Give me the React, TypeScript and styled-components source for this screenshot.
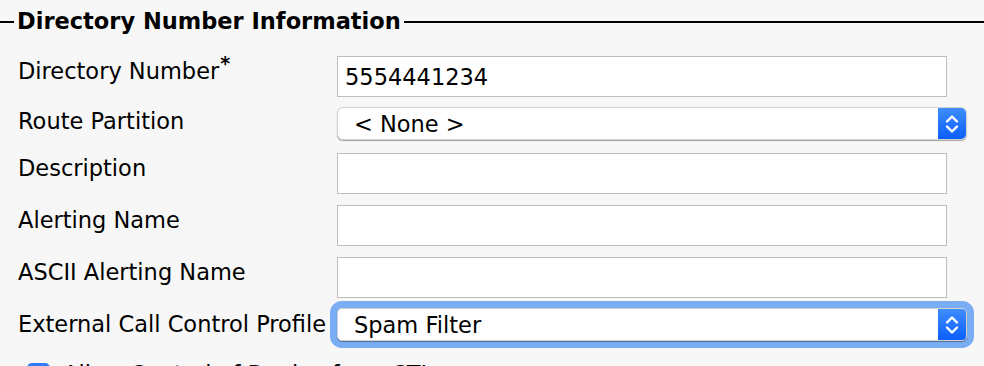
import React from "react";
import styled, { createGlobalStyle, css } from "styled-components";

const Global = createGlobalStyle`
  html, body {
    margin: 0;
    padding: 0;
    background: #f7f7f7;
    overflow: hidden;
  }
  body {
    font-family: "DejaVu Sans", Verdana, sans-serif;
    color: #000;
  }
`;

const Page = styled.div`
  width: 984px;
  height: 366px;
  overflow: hidden;
  padding-top: 9px;
  box-sizing: border-box;
`;

const Fieldset = styled.fieldset`
  margin: 0;
  padding: 0 0 0 18px;
  border: none;
  border-top: 2px solid #000;
  min-width: 0;
`;

const Legend = styled.legend`
  margin-left: -4px;
  padding: 0 3px;
  font-size: 22.5px;
  font-weight: bold;
  line-height: 25px;
`;

const Form = styled.div`
  display: grid;
  grid-template-columns: 319px 1fr;
  row-gap: 11px;
  margin-top: 22px;
  align-items: start;
`;

const Label = styled.label<{ $tight?: boolean }>`
  font-size: 22.5px;
  line-height: 26px;
  white-space: nowrap;
  padding-top: ${(p) => (p.$tight ? "0px" : "2px")};
`;

const Req = styled.sup`
  font-size: 19px;
  font-weight: bold;
  vertical-align: 9px;
  line-height: 0;
  margin-left: 1px;
`;

const TextInput = styled.input`
  box-sizing: border-box;
  width: 610px;
  height: 41px;
  margin: 0;
  padding: 0 7px;
  border: 1px solid #bebebe;
  background: #fff;
  font-family: "DejaVu Sans", Verdana, sans-serif;
  font-size: 22.5px;
  color: #000;
  outline: none;
`;

const SelectBox = styled.div<{ $focused?: boolean }>`
  display: flex;
  box-sizing: border-box;
  width: 630px;
  height: 33px;
  margin-top: -1px;
  margin-bottom: 2px;
  border-radius: 6px;
  background: #fff;
  border: 1px solid #d2d2d2;
  box-shadow: 0 1px 1px rgba(0, 0, 0, 0.35);
  overflow: hidden;
  ${(p) =>
    p.$focused &&
    css`
      border-radius: 5px;
      box-shadow: 0 1px 1px rgba(0, 0, 0, 0.35), 0 0 0 7px #7badf4;
    `}
`;

const NativeSelect = styled.select`
  flex: 1;
  appearance: none;
  -webkit-appearance: none;
  border: none;
  background: transparent;
  margin: 0;
  padding: 0 0 0 16px;
  font-family: "DejaVu Sans", Verdana, sans-serif;
  font-size: 22.5px;
  color: #000;
  outline: none;
`;

const Stepper = styled.span`
  display: flex;
  align-items: center;
  justify-content: center;
  width: 28px;
  background: linear-gradient(#3f8dfd, #0b5ffd);
`;

const CheckRow = styled.div`
  display: flex;
  align-items: center;
  gap: 13px;
  margin: 18px 0 0 9px;
  font-size: 22.5px;
`;

const Check = styled.span`
  display: inline-flex;
  align-items: center;
  justify-content: center;
  width: 23px;
  height: 23px;
  border-radius: 5px;
  background: #2f7cf6;
`;

const Chevrons = () => (
  <svg width="16" height="24" viewBox="0 0 16 24" fill="none">
    <path d="M3 9.5 L8 4.5 L13 9.5" stroke="#fff" strokeWidth="2.4" strokeLinecap="round" strokeLinejoin="round" />
    <path d="M3 14.5 L8 19.5 L13 14.5" stroke="#fff" strokeWidth="2.4" strokeLinecap="round" strokeLinejoin="round" />
  </svg>
);

const Select = ({ value, focused }: { value: string; focused?: boolean }) => (
  <SelectBox $focused={focused}>
    <NativeSelect defaultValue={value}>
      <option>{value}</option>
    </NativeSelect>
    <Stepper>
      <Chevrons />
    </Stepper>
  </SelectBox>
);

export default function App() {
  return (
    <Page>
      <Global />
      <Fieldset>
        <Legend>Directory Number Information</Legend>
        <Form>
          <Label>
            Directory Number<Req>*</Req>
          </Label>
          <TextInput defaultValue="5554441234" />

          <Label $tight>Route Partition</Label>
          <Select value="< None >" />

          <Label>Description</Label>
          <TextInput />

          <Label>Alerting Name</Label>
          <TextInput />

          <Label>ASCII Alerting Name</Label>
          <TextInput />

          <Label>External Call Control Profile</Label>
          <Select value="Spam Filter" focused />
        </Form>
        <CheckRow>
          <Check>
            <svg width="14" height="14" viewBox="0 0 14 14" fill="none">
              <path d="M2.5 7.5 L5.5 10.5 L11.5 3.5" stroke="#fff" strokeWidth="2.2" strokeLinecap="round" strokeLinejoin="round" />
            </svg>
          </Check>
          <span>Allow Control of Device from CTI</span>
        </CheckRow>
      </Fieldset>
    </Page>
  );
}
